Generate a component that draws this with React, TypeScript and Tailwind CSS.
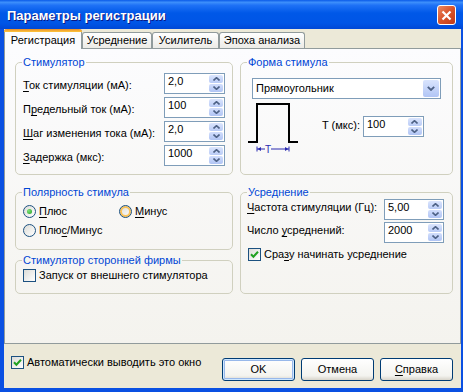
import type { ReactNode } from 'react';

function U({ children }: { children: ReactNode }) {
  return <span className="underline decoration-1 underline-offset-[2px]">{children}</span>;
}

function Arrow({ up }: { up?: boolean }) {
  return (
    <svg width="7" height="4" viewBox="0 0 7 4">
      <path
        d={up ? 'M0.5 3.5 L3.5 0.7 L6.5 3.5' : 'M0.5 0.5 L3.5 3.3 L6.5 0.5'}
        fill="none"
        stroke="#4d6185"
        strokeWidth="1.6"
      />
    </svg>
  );
}

function Spin({ value, className }: { value: string; className: string }) {
  return (
    <div className={`flex h-[21px] shrink-0 border border-[#7f9db9] bg-white ${className}`}>
      <span className="flex-1 pl-[3px] pt-[1px] leading-[13px]">{value}</span>
      <div className="flex w-[16px] flex-col gap-px p-px">
        <div className="flex flex-1 items-center justify-center rounded-[2px] bg-[linear-gradient(to_bottom,#dbe5fd,#b9cbf6)]">
          <Arrow up />
        </div>
        <div className="flex flex-1 items-center justify-center rounded-[2px] bg-[linear-gradient(to_bottom,#d2defc,#b0c4f4)]">
          <Arrow />
        </div>
      </div>
    </div>
  );
}

function Check({ checked }: { checked?: boolean }) {
  return (
    <span className="flex h-[13px] w-[13px] shrink-0 items-center justify-center border border-[#1c5180] bg-[linear-gradient(135deg,#dcdcd7,#ffffff)]">
      {checked && (
        <svg width="9" height="9" viewBox="0 0 9 9">
          <path d="M1 4.3 L3.4 6.8 L8 1.8" fill="none" stroke="#21a121" strokeWidth="2" />
        </svg>
      )}
    </span>
  );
}

function Radio({ checked, hover }: { checked?: boolean; hover?: boolean }) {
  return (
    <span
      className={`flex h-[13px] w-[13px] shrink-0 items-center justify-center rounded-full border border-[#1c5180] bg-[linear-gradient(135deg,#dcdcd7,#ffffff)] ${
        hover ? 'shadow-[inset_0_0_0_2px_#f9c25a]' : ''
      }`}
    >
      {checked && <span className="h-[5px] w-[5px] rounded-full bg-[radial-gradient(circle_at_35%_35%,#7ee27a,#21a121)]" />}
    </span>
  );
}

function Group({ title, className, children }: { title: string; className: string; children: ReactNode }) {
  return (
    <fieldset className={`rounded-[5px] border border-[#d0d0bf] ${className}`}>
      <legend className="ml-[6px] px-[1px] leading-[13px] text-[#0046d5]">{title}</legend>
      {children}
    </fieldset>
  );
}

function Btn({ children, primary }: { children: ReactNode; primary?: boolean }) {
  return (
    <button
      className={`flex h-[23px] w-[73px] items-center justify-center rounded-[3px] border border-[#003c74] bg-[linear-gradient(to_bottom,#ffffff,#f3f3ef_80%,#d8d4ca)] leading-[13px] text-black ${
        primary ? 'shadow-[inset_0_0_0_1px_#cee7ff,inset_0_0_0_2px_#98b8ea]' : ''
      }`}
    >
      {children}
    </button>
  );
}

function Pulse() {
  return (
    <svg width="54" height="52" viewBox="0 0 54 52" className="shrink-0">
      <polyline points="2,40 11,40 11,2 43,2 43,40 52,40" fill="none" stroke="#000" strokeWidth="2" />
      <g stroke="#2a2ab0" fill="#2a2ab0">
        <line x1="11" y1="44.5" x2="11" y2="49.5" strokeWidth="1" />
        <line x1="43" y1="44.5" x2="43" y2="49.5" strokeWidth="1" />
        <line x1="11" y1="47" x2="19" y2="47" strokeWidth="1" />
        <line x1="25" y1="47" x2="43" y2="47" strokeWidth="1" />
        <polygon points="11.5,47 15,45 15,49" stroke="none" />
        <polygon points="42.5,47 39,45 39,49" stroke="none" />
      </g>
      <text x="22" y="51" textAnchor="middle" fontSize="10" fill="#2a2ab0" fontFamily="Liberation Sans, Arial, sans-serif">
        T
      </text>
    </svg>
  );
}

export default function App() {
  return (
    <div className="flex h-[392px] w-[463px] flex-col bg-[#0a50e2] font-['Liberation_Sans',Arial,sans-serif] text-[11px] text-black">
      <div className="flex h-[29px] shrink-0 items-start justify-between bg-[linear-gradient(to_bottom,#0a5ae8_0%,#3d8ffb_8%,#1f72f6_18%,#0058e8_45%,#0055e6_80%,#0048d6_100%)] pl-[7px] pr-[7px]">
        <span className="mt-[8px] text-[13px] font-bold leading-[16px] text-white [text-shadow:1px_1px_0_#0a1883]">
          Параметры регистрации
        </span>
        <span className="mt-[5px] flex h-[20px] w-[19px] items-center justify-center rounded-[3px] border border-white bg-[linear-gradient(135deg,#ec8a63,#d8532a_50%,#c23a17)]">
          <svg width="11" height="11" viewBox="0 0 11 11">
            <path d="M1.5 1.5 L9.5 9.5 M9.5 1.5 L1.5 9.5" stroke="#fff" strokeWidth="2.2" />
          </svg>
        </span>
      </div>

      <div className="mb-[4px] ml-[4px] mr-[2px] flex flex-1 flex-col bg-[#ece9d8]">
        <div className="flex h-[19px] shrink-0 items-end">
          <div className="relative z-10 -mb-px flex h-[20px] w-[78px] flex-col rounded-t-[3px] border-x border-[#919b9c] bg-[#fcfcfe]">
            <div className="-mx-px h-[3px] rounded-t-[3px] bg-[linear-gradient(to_bottom,#e68b2c,#ffc73c)]" />
            <div className="flex flex-1 items-center justify-center leading-[13px]">Регистрация</div>
          </div>
          <div className="flex h-[16px] w-[70px] items-center justify-center rounded-t-[3px] border border-b-0 border-[#919b9c] bg-[linear-gradient(to_bottom,#ffffff,#ecebe6)] leading-[13px]">
            Усреднение
          </div>
          <div className="flex h-[16px] w-[67px] items-center justify-center rounded-t-[3px] border border-b-0 border-[#919b9c] bg-[linear-gradient(to_bottom,#ffffff,#ecebe6)] leading-[13px]">
            Усилитель
          </div>
          <div className="flex h-[16px] w-[86px] items-center justify-center rounded-t-[3px] border border-b-0 border-[#919b9c] bg-[linear-gradient(to_bottom,#ffffff,#ecebe6)] leading-[13px]">
            Эпоха анализа
          </div>
        </div>

        <div className="flex h-[296px] shrink-0 gap-[7px] border border-[#919b9c] bg-[linear-gradient(to_bottom,#fcfcfe,#f4f3ee)] pl-[10px] pt-[7px]">
          <div className="flex w-[218px] flex-col">
            <Group title="Стимулятор" className="h-[119px]">
              <div className="flex flex-col gap-[3px] pl-[7px] pr-[7px] pt-[4px]">
                <div className="flex h-[21px] items-start justify-between">
                  <span className="mt-[6px] leading-[13px]"><U>Т</U>ок стимуляции (мА):</span>
                  <Spin value="2,0" className="w-[61px]" />
                </div>
                <div className="flex h-[21px] items-start justify-between">
                  <span className="mt-[6px] leading-[13px]">П<U>р</U>едельный ток (мА):</span>
                  <Spin value="100" className="w-[61px]" />
                </div>
                <div className="flex h-[21px] items-start justify-between">
                  <span className="mt-[6px] leading-[13px]"><U>Ш</U>аг изменения тока (мА):</span>
                  <Spin value="2,0" className="w-[61px]" />
                </div>
                <div className="flex h-[21px] items-start justify-between">
                  <span className="mt-[6px] leading-[13px]"><U>З</U>адержка (мкс):</span>
                  <Spin value="1000" className="w-[61px]" />
                </div>
              </div>
            </Group>

            <Group title="Полярность стимула" className="mt-[11px] h-[64px]">
              <div className="grid grid-cols-[96px_1fr] gap-y-[3px] pl-[7px] pt-[4px]">
                <label className="flex h-[16px] items-center gap-[3px] leading-[13px]">
                  <Radio checked />
                  <span><U>П</U>люс</span>
                </label>
                <label className="flex h-[16px] items-center gap-[3px] leading-[13px]">
                  <Radio hover />
                  <span><U>М</U>инус</span>
                </label>
                <label className="flex h-[16px] items-center gap-[3px] leading-[13px]">
                  <Radio />
                  <span>Плю<U>с</U>/Минус</span>
                </label>
              </div>
            </Group>

            <Group title="Стимулятор сторонней фирмы" className="mt-[4px] h-[40px]">
              <label className="flex h-[16px] items-center gap-[3px] pl-[7px] pt-[0px] leading-[13px]">
                <Check />
                <span>Запуск от внешнего стимулятора</span>
              </label>
            </Group>
          </div>

          <div className="flex w-[213px] flex-col">
            <Group title="Форма стимула" className="h-[119px]">
              <div className="flex flex-col pl-[5px] pt-[9px]">
                <div className="ml-[6px] flex h-[21px] w-[189px] items-center border border-[#7f9db9] bg-white pl-[3px]">
                  <span className="flex-1 leading-[13px]">Прямоугольник</span>
                  <span className="mr-px flex h-[17px] w-[16px] items-center justify-center rounded-[2px] bg-[linear-gradient(to_bottom,#d9e4fd,#b1c5f5)]">
                    <svg width="8" height="5" viewBox="0 0 8 5">
                      <path d="M0.8 0.8 L4 4 L7.2 0.8" fill="none" stroke="#4d6185" strokeWidth="1.8" />
                    </svg>
                  </span>
                </div>
                <div className="mt-[3px] flex items-start">
                  <Pulse />
                  <div className="ml-[22px] mt-[14px] flex items-start gap-[3px]">
                    <span className="mt-[3px] leading-[13px]">T (мкс):</span>
                    <Spin value="100" className="w-[61px]" />
                  </div>
                </div>
              </div>
            </Group>

            <Group title="Усреднение" className="mt-[11px] h-[108px]">
              <div className="flex flex-col gap-[3px] pl-[6px] pr-[8px]">
                <div className="flex h-[20px] items-start justify-between">
                  <span className="mt-[2px] leading-[13px]"><U>Ч</U>астота стимуляции (Гц):</span>
                  <Spin value="5,00" className="h-[20px] w-[60px]" />
                </div>
                <div className="flex h-[20px] items-start justify-between">
                  <span className="mt-[2px] leading-[13px]">Число <U>у</U>среднений:</span>
                  <Spin value="2000" className="h-[20px] w-[60px]" />
                </div>
                <label className="ml-px mt-[1px] flex h-[16px] items-center gap-[3px] leading-[13px]">
                  <Check checked />
                  <span>Сра<U>з</U>у начинать усреднение</span>
                </label>
              </div>
            </Group>
          </div>
        </div>

        <div className="flex flex-1 items-start justify-between pl-[7px] pr-[8px]">
          <label className="mt-[12px] flex items-center gap-[3px] leading-[13px]">
            <Check checked />
            <span>Автоматически выводить это окно</span>
          </label>
          <div className="mt-[14px] flex gap-[6px]">
            <Btn primary>OK</Btn>
            <Btn>Отмена</Btn>
            <Btn>
              <span><U>С</U>правка</span>
            </Btn>
          </div>
        </div>
      </div>
    </div>
  );
}
